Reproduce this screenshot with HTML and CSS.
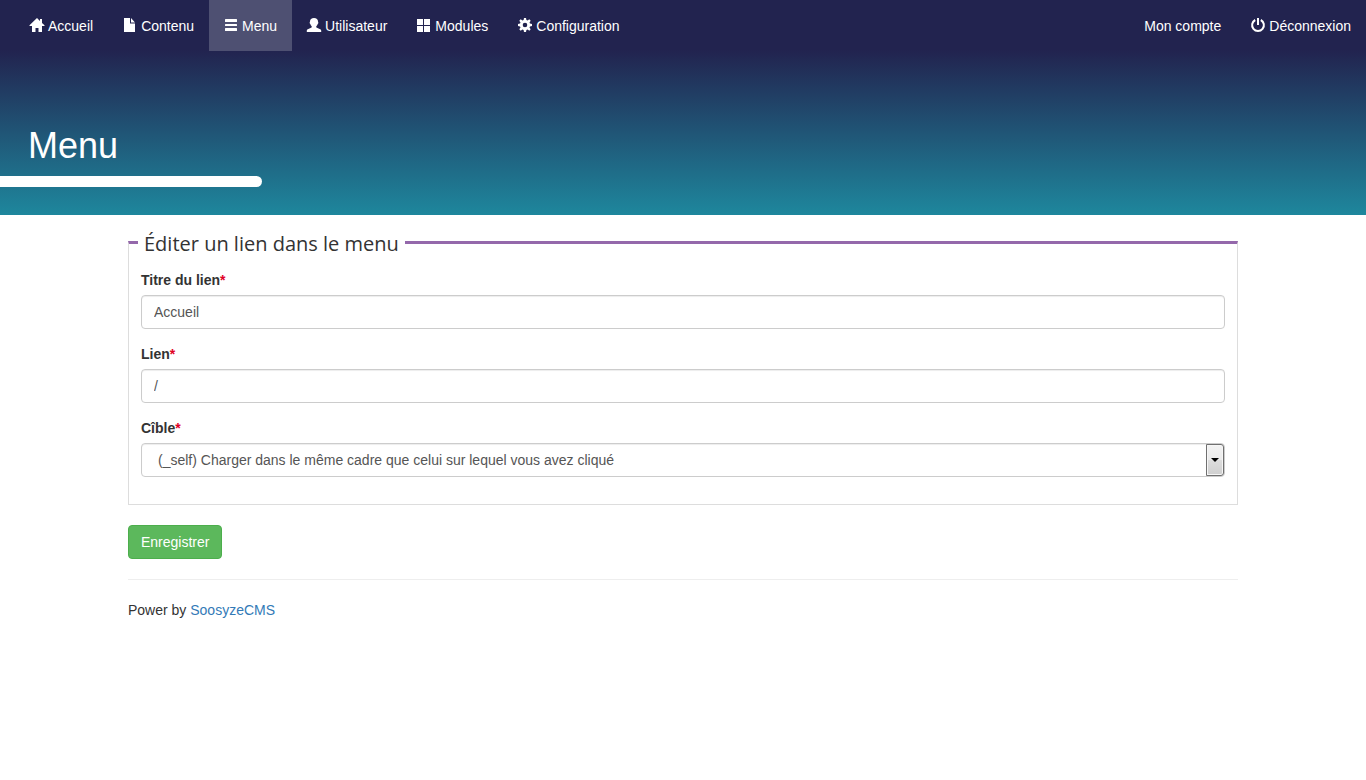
FILE: index.html
```html
<!DOCTYPE html>
<html lang="fr">
<head>
<meta charset="utf-8">
<meta name="viewport" content="width=device-width, initial-scale=1">
<title>Menu</title>
<link rel="stylesheet" href="styles.css">
</head>
<body>
<header class="header">
  <nav class="nav">
    <ul class="nav-list">
      <li><a class="nav-link" href="#"><svg class="icon" viewBox="0 0 14 14" aria-hidden="true"><path d="M7 0 -.5 7.300V8H2v6h3.500v-4h3v4H12V8h2.500v-.700L12 4.900V1h-2v2z"/></svg>Accueil</a></li>
      <li><a class="nav-link" href="#"><svg class="icon" viewBox="0 0 14 14" aria-hidden="true"><path d="M1 0h6v5.500h5V14H1zM8 0l4 4.500H8z"/></svg>Contenu</a></li>
      <li><a class="nav-link nav-link-active" href="#"><svg class="icon" viewBox="0 0 14 14" aria-hidden="true"><rect x="1" y="1" width="12" height="3" rx=".5"/><rect x="1" y="6" width="12" height="2" rx=".5"/><rect x="1" y="10" width="12" height="3" rx=".5"/></svg>Menu</a></li>
      <li><a class="nav-link" href="#"><svg class="icon" viewBox="0 0 14 14" aria-hidden="true"><path d="M7 0c2.500 0 4 1.500 4 3.500 0 .5.400.600.300 1.500-.1.800-.6.800-.8 1.400C10.200 7.400 9.200 8 9.200 8.800c0 .7.500 1 1.300 1.300l2.700 1.100c.8.400 1 .8 1 1.600V14H-.2v-1.200c0-.8.200-1.200 1-1.600l2.700-1.100c.8-.3 1.300-.6 1.300-1.300 0-.8-1-1.400-1.300-2.400-.2-.6-.7-.6-.8-1.400-.1-.9.300-1 .3-1.500C3 1.500 4.500 0 7 0z"/></svg>Utilisateur</a></li>
      <li><a class="nav-link" href="#"><svg class="icon" viewBox="0 0 14 14" aria-hidden="true"><path d="M0 1h6v6H0zM7 1h6v6H7zM0 8h6v6H0zM7 8h6v6H7z"/></svg>Modules</a></li>
      <li><a class="nav-link" href="#"><svg class="icon" viewBox="0 0 14 14" aria-hidden="true"><path fill-rule="evenodd" d="M6 0h2l.4 2 1.200.5L11.300 1.300l1.400 1.400L11.500 4.400 12 5.600l2 .4v2l-2 .4-.5 1.200 1.200 1.700-1.400 1.400-1.700-1.200-1.200.5L8 14H6l-.4-2-1.200-.5-1.700 1.200-1.400-1.400L2.500 9.600 2 8.400 0 8V6l2-.4.5-1.200L1.300 2.700l1.400-1.400 1.700 1.200L5.600 2zM7 4.700a2.300 2.300 0 1 0 0 4.600 2.300 2.300 0 0 0 0-4.600z"/></svg>Configuration</a></li>
    </ul>
    <ul class="nav-list">
      <li><a class="nav-link" href="#">Mon compte</a></li>
      <li><a class="nav-link" href="#"><svg class="icon" viewBox="0 0 14 14" aria-hidden="true"><path d="M6 0h2v7H6z"/><path d="M4.200 2a5.900 5.900 0 1 0 5.600 0" fill="none" stroke="currentColor" stroke-width="2"/></svg>Déconnexion</a></li>
    </ul>
  </nav>
  <h1 class="title">Menu</h1>
</header>
<main class="container">
  <form>
    <fieldset class="fieldset">
      <legend class="legend">Éditer un lien dans le menu</legend>
      <div class="form-group">
        <label class="label" for="title">Titre du lien<span class="required">*</span></label>
        <input class="control" type="text" id="title" value="Accueil">
      </div>
      <div class="form-group">
        <label class="label" for="link">Lien<span class="required">*</span></label>
        <input class="control" type="text" id="link" value="/">
      </div>
      <div class="form-group">
        <label class="label" for="target">Cîble<span class="required">*</span></label>
        <div class="select-wrap">
          <select class="control select" id="target">
            <option>(_self) Charger dans le même cadre que celui sur lequel vous avez cliqué</option>
          </select>
        </div>
      </div>
    </fieldset>
    <button class="button" type="submit">Enregistrer</button>
  </form>
  <footer class="footer">Power by <a class="link" href="#">SoosyzeCMS</a></footer>
</main>
</body>
</html>
```

FILE: styles.css
```css
*,
*::before,
*::after {
  box-sizing: border-box;
}

body {
  margin: 0;
  background: #fff;
  color: #333;
  font: 14px/20px "Liberation Sans", Arial, sans-serif;
}

.header {
  padding-bottom: 28px;
  background: linear-gradient(#22234f 50px, #1e879d);
}

.nav {
  display: flex;
  justify-content: space-between;
  padding-left: 15px;
}

.nav-list {
  display: flex;
  margin: 0;
  padding: 0;
  list-style: none;
}

.nav-link {
  display: flex;
  gap: 4px;
  padding: 16px 15px 15px;
  color: #fff;
  text-decoration: none;
}

.nav-link-active {
  background: #4e5072;
}

.icon {
  width: 14px;
  height: 14px;
  margin-top: 2px;
  overflow: visible;
  fill: currentColor;
}

.title {
  margin: 75px 0 0;
  color: #fff;
  font-size: 36px;
  font-weight: 400;
  line-height: 40px;
  text-indent: 28px;
}

.title::after {
  content: "";
  display: block;
  width: 262px;
  height: 11px;
  margin-top: 10px;
  border-radius: 0 6px 6px 0;
  background: #fff;
}

.container {
  max-width: 1140px;
  margin: 0 auto;
  padding: 13px 15px;
}

.fieldset {
  min-width: 0;
  margin: 0 0 20px;
  padding: 13px 12px 12px;
  border: 1px solid #ddd;
  border-top: 3px solid #9468ab;
}

.legend {
  margin-left: -3px;
  padding: 3px 6px 0;
  font: 20px/26px "Open Sans", sans-serif;
}

.form-group {
  margin-bottom: 15px;
}

.label {
  display: block;
  margin-bottom: 5px;
  font-weight: 700;
}

.required {
  color: #e00025;
}

.control {
  display: block;
  width: 100%;
  height: 34px;
  padding: 6px 12px;
  border: 1px solid #ccc;
  border-radius: 4px;
  background: #fff;
  box-shadow: inset 0 1px 1px rgba(0, 0, 0, 0.075);
  color: #555;
  font: inherit;
}

.select-wrap {
  position: relative;
}

.select {
  padding: 6px 30px 6px 16px;
  appearance: none;
}

.select-wrap::before {
  content: "";
  position: absolute;
  top: 1px;
  right: 1px;
  width: 18px;
  height: 32px;
  border: 1px solid #707070;
  border-radius: 0 3px 3px 0;
  background: linear-gradient(#f2f2f2, #ebebeb 50%, #ddd 50%, #cfcfcf);
  box-shadow: inset 0 0 0 1px #f6f6f6;
  pointer-events: none;
}

.select-wrap::after {
  content: "";
  position: absolute;
  top: 15px;
  right: 6px;
  border: 4px solid transparent;
  border-top-color: #000;
  border-bottom: 0;
  pointer-events: none;
}

.button {
  display: block;
  padding: 6px 12px;
  border: 1px solid #4cae4c;
  border-radius: 4px;
  background: #5cb85c;
  color: #fff;
  font: inherit;
}

.footer {
  margin-top: 20px;
  padding-top: 20px;
  border-top: 1px solid #eee;
}

.link {
  color: #337ab7;
  text-decoration: none;
}
```
